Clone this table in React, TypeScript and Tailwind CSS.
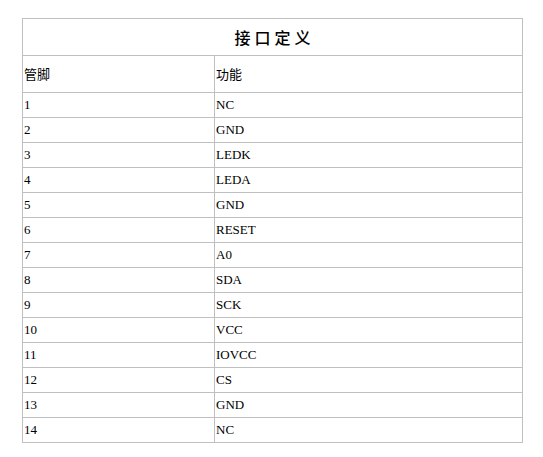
import React from 'react';

const pins: [string, string][] = [
  ['1', 'NC'],
  ['2', 'GND'],
  ['3', 'LEDK'],
  ['4', 'LEDA'],
  ['5', 'GND'],
  ['6', 'RESET'],
  ['7', 'A0'],
  ['8', 'SDA'],
  ['9', 'SCK'],
  ['10', 'VCC'],
  ['11', 'IOVCC'],
  ['12', 'CS'],
  ['13', 'GND'],
  ['14', 'NC'],
];

const cell = 'border border-[#c0c0c0] px-[1px] text-left font-normal';

const App: React.FC = () => {
  return (
    <div className="w-[543px] h-[457px] bg-white pt-[18px] pl-[22px] text-black font-['Liberation_Serif','Noto_Sans_CJK_SC',serif] text-[13px]">
      <table className="w-[501px] border-collapse table-fixed">
        <colgroup>
          <col className="w-[192px]" />
          <col />
        </colgroup>
        <thead>
          <tr className="h-[37px]">
            <th
              colSpan={2}
              className="border border-[#c0c0c0] text-center text-[16px] font-medium tracking-[4px] pl-[4px] font-['Noto_Sans_CJK_SC',sans-serif]"
            >
              接口定义
            </th>
          </tr>
        </thead>
        <tbody>
          <tr className="h-[37px]">
            <td className={`${cell} font-['Noto_Sans_CJK_SC',sans-serif]`}>管脚</td>
            <td className={`${cell} font-['Noto_Sans_CJK_SC',sans-serif]`}>功能</td>
          </tr>
          {pins.map(([pin, fn]) => (
            <tr key={pin} className="h-[25px]">
              <td className={cell}>{pin}</td>
              <td className={cell}>{fn}</td>
            </tr>
          ))}
        </tbody>
      </table>
    </div>
  );
};

export default App;
